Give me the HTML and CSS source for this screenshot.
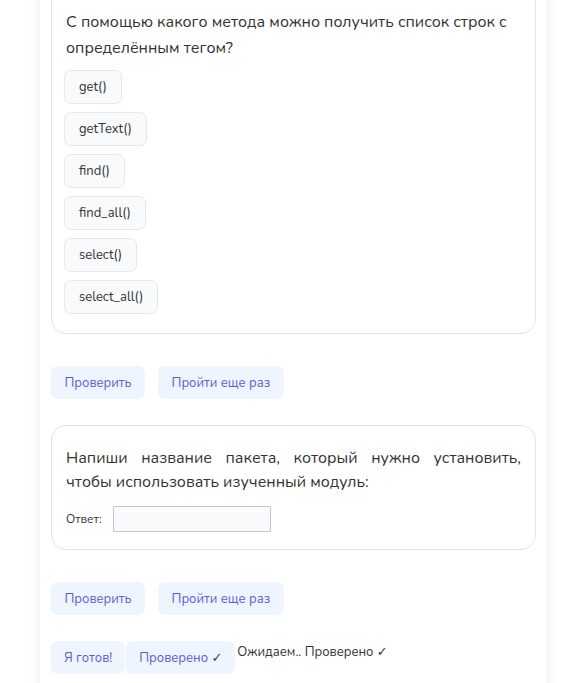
FILE: index.html
```html
<!DOCTYPE html>
<html lang="ru">
<head>
<meta charset="utf-8">
<title>Тест</title>
<link rel="stylesheet" href="styles.css">
</head>
<body>
<main class="page">
  <section class="card card-first">
    <p class="question">С помощью какого метода можно получить список строк с определённым тегом?</p>
    <div class="options">
      <button class="option">get()</button>
      <button class="option">getText()</button>
      <button class="option">find()</button>
      <button class="option">find_all()</button>
      <button class="option">select()</button>
      <button class="option">select_all()</button>
    </div>
  </section>
  <div class="actions">
    <button class="action">Проверить</button>
    <button class="action">Пройти еще раз</button>
  </div>
  <section class="card card-second">
    <p class="question question-justify">Напиши название пакета, который нужно установить, чтобы использовать изученный модуль:</p>
    <div class="answer">
      <label class="answer-label" for="ans">Ответ:</label>
      <input class="answer-input" id="ans" type="text">
    </div>
  </section>
  <div class="actions">
    <button class="action">Проверить</button>
    <button class="action">Пройти еще раз</button>
  </div>
  <div class="status-row">
    <button class="action action-tight">Я готов!</button>
    <button class="action action-tight">Проверено <span class="check">✓</span></button>
    <span class="status-text">Ожидаем.. Проверено <span class="check">✓</span></span>
  </div>
</main>
</body>
</html>
```

FILE: styles.css
```css
html, body {
  margin: 0;
  padding: 0;
  background: #ffffff;
}
body {
  font-family: "Nunito", "Open Sans", "Noto Sans", sans-serif;
  color: #333333;
  overflow: hidden;
}
.page {
  margin-left: 40px;
  width: 485px;
  margin-top: -19px;
  padding: 0 11px 40px 11px;
  background: #ffffff;
  box-shadow: 0 0 14px rgba(0, 0, 0, 0.07);
  min-height: 760px;
}
.card {
  border: 1px solid #e4e4e7;
  border-radius: 15px;
  background: #ffffff;
  padding: 0 14px;
}
.card-first {
  padding-top: 28px;
  padding-bottom: 19px;
}
.card-second {
  margin-top: 26px;
  padding-top: 20px;
  padding-bottom: 17px;
}
.question {
  margin: 0;
  font-size: 16px;
  line-height: 25.5px;
  color: #333333;
}
.question-justify {
  text-align: justify;
  line-height: 24px;
}
.options {
  display: flex;
  flex-direction: column;
  align-items: flex-start;
  gap: 8px;
  margin-top: 9px;
  margin-left: -2px;
}
.option {
  font-family: inherit;
  font-size: 13px;
  color: #333333;
  background: #f9fafb;
  border: 1px solid #e5e7eb;
  border-radius: 7px;
  height: 34px;
  padding: 0 14px;
  cursor: pointer;
}
.actions {
  display: flex;
  gap: 13px;
  margin-top: 32px;
}
.action {
  font-family: inherit;
  font-size: 13px;
  color: #5b5bd6;
  background: #eef5ff;
  border: none;
  border-radius: 7px;
  height: 33px;
  padding: 0 13.5px;
  cursor: pointer;
}
.action-tight {
  padding: 0 13px;
}
.check {
  font-family: "DejaVu Sans", sans-serif;
  font-weight: bold;
  font-size: 13px;
  line-height: 1;
  color: #3a3a8c;
}
.status-text .check {
  color: #333333;
}
.answer {
  display: flex;
  align-items: center;
  gap: 11px;
  margin-top: 12px;
}
.answer-label {
  font-size: 12px;
  color: #333333;
}
.answer-input {
  width: 154px;
  height: 22px;
  border: 1px solid #c4c6ce;
  background: #f9fafb;
  border-radius: 1px;
  padding: 1px;
}
.status-row {
  display: flex;
  align-items: flex-start;
  gap: 1px;
  margin-top: 26px;
}
.status-text {
  font-size: 13px;
  line-height: 17px;
  color: #333333;
  margin-left: 1px;
  padding-top: 3px;
}
```
